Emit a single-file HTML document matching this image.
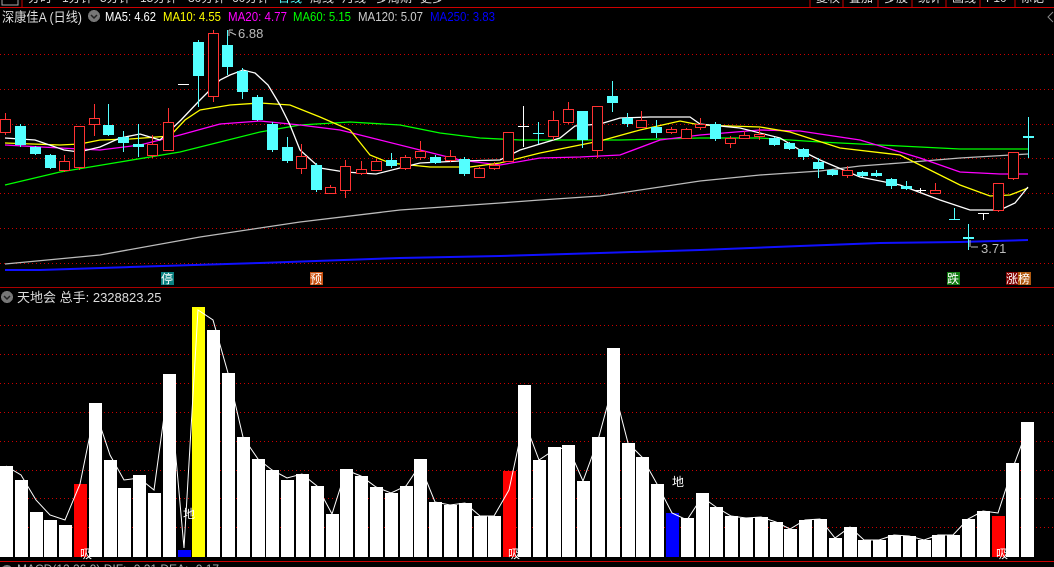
<!DOCTYPE html>
<html><head><meta charset="utf-8"><style>
html,body{margin:0;padding:0;background:#000;width:1054px;height:567px;overflow:hidden}
svg{position:absolute;left:0;top:0}
</style></head><body>
<svg width="1054" height="567" viewBox="0 0 1054 567" xmlns="http://www.w3.org/2000/svg" shape-rendering="crispEdges">
<g fill="#ddd" font-size="12" font-family="Liberation Sans, Noto Sans CJK SC, sans-serif">
<text x="28" y="2">分时</text><text x="62" y="2">1分钟</text><text x="100" y="2">5分钟</text><text x="140" y="2">15分钟</text><text x="188" y="2">30分钟</text><text x="232" y="2">60分钟</text>
<text x="278" y="2" fill="#5ff">日线</text><text x="310" y="2">周线</text><text x="342" y="2">月线</text><text x="376" y="2">多周期</text><text x="420" y="2">更多</text>
<text x="816" y="2">复权</text><text x="849" y="2">叠加</text><text x="884" y="2">多股</text><text x="918" y="2">统计</text><text x="952" y="2">画线</text><text x="986" y="2">F10</text><text x="1020" y="2">标记</text>
</g>
<rect x="2" y="-4" width="16" height="9" fill="none" stroke="#aaa"/>
<g stroke="#c00" stroke-width="1"><line x1="22" y1="0" x2="22" y2="7"/><line x1="810" y1="0" x2="810" y2="7"/><line x1="843" y1="0" x2="843" y2="7"/><line x1="878" y1="0" x2="878" y2="7"/><line x1="912" y1="0" x2="912" y2="7"/><line x1="946" y1="0" x2="946" y2="7"/><line x1="980" y1="0" x2="980" y2="7"/><line x1="1015" y1="0" x2="1015" y2="7"/></g>
<line x1="0" y1="7.5" x2="1054" y2="7.5" stroke="#c00"/>
<text x="2" y="22" fill="#ddd" font-size="13.5" font-family="Liberation Sans, Noto Sans CJK SC, sans-serif" textLength="80" lengthAdjust="spacingAndGlyphs">深康佳A (日线)</text>
<circle cx="94" cy="16" r="6" fill="#777"/><path d="M91 15 L94 18 L97 15" stroke="#222" fill="none" stroke-width="1.5" shape-rendering="auto"/>
<g font-size="13" font-family="Liberation Sans, sans-serif">
<text x="105" y="21" fill="#fff" textLength="51" lengthAdjust="spacingAndGlyphs">MA5: 4.62</text>
<text x="163" y="21" fill="#ff0" textLength="58" lengthAdjust="spacingAndGlyphs">MA10: 4.55</text>
<text x="228" y="21" fill="#f0f" textLength="59" lengthAdjust="spacingAndGlyphs">MA20: 4.77</text>
<text x="293" y="21" fill="#0f0" textLength="58" lengthAdjust="spacingAndGlyphs">MA60: 5.15</text>
<text x="358" y="21" fill="#ccc" textLength="65" lengthAdjust="spacingAndGlyphs">MA120: 5.07</text>
<text x="430" y="21" fill="#00f" textLength="65" lengthAdjust="spacingAndGlyphs">MA250: 3.83</text>
</g>
<path d="M1053 12 L1048 17 L1053 22" stroke="#888" fill="none" shape-rendering="auto"/>
<g stroke="#c00" stroke-dasharray="1 3">
<line x1="0" y1="54.5" x2="1054" y2="54.5"/><line x1="0" y1="89.5" x2="1054" y2="89.5"/><line x1="0" y1="124.5" x2="1054" y2="124.5"/><line x1="0" y1="158.5" x2="1054" y2="158.5"/><line x1="0" y1="193.5" x2="1054" y2="193.5"/><line x1="0" y1="228.5" x2="1054" y2="228.5"/><line x1="0" y1="263.5" x2="1054" y2="263.5"/>
<line x1="0" y1="325.5" x2="1054" y2="325.5"/><line x1="0" y1="354.5" x2="1054" y2="354.5"/><line x1="0" y1="383.5" x2="1054" y2="383.5"/><line x1="0" y1="412.5" x2="1054" y2="412.5"/><line x1="0" y1="441.5" x2="1054" y2="441.5"/><line x1="0" y1="470.5" x2="1054" y2="470.5"/><line x1="0" y1="498.5" x2="1054" y2="498.5"/><line x1="0" y1="527.5" x2="1054" y2="527.5"/>
</g>
<g fill="none" stroke-width="1.3" shape-rendering="auto">
<polyline stroke="#1010ff" stroke-width="2" points="5,270 40,270 130,267 260,263 400,258 500,256 600,253 700,250 800,246 880,243 960,242 1028,240"/>
<polyline stroke="#bbb" points="5,264 100,255 200,237 300,222 400,210 500,203 540,200 600,196 700,181 760,175 820,171 860,166 900,163 960,158 1028,154"/>
<polyline stroke="#0f0" points="5,185 60,172 120,162 180,152 220,142 260,132 300,125 350,122 400,125 440,133 480,138 520,140 560,140 620,140 700,138 760,138 820,142 900,146 960,149 1028,149"/>
<polyline stroke="#f0f" points="5,145 60,148 100,150 140,145 180,135 220,124 260,121 300,125 340,130 380,140 420,150 460,160 500,165 540,158 580,157 620,155 660,140 700,135 760,130 800,131 860,140 920,158 960,172 1000,174 1028,174"/>
<polyline stroke="#ff0" points="5,143 60,145 80,144 100,140 130,139 170,136 185,120 200,110 230,105 260,103 290,105 320,117 350,130 370,155 390,163 430,167 470,167 500,163 540,153 570,147 600,141 640,130 680,121 700,125 760,127 790,132 840,148 900,155 930,170 960,185 990,196 1010,195 1028,188"/>
<polyline stroke="#fff" points="5,138 35,140 64,150 79,152 100,147 120,138 140,134 160,140 181,120 200,100 220,80 230,75 243,70 255,73 268,85 280,105 290,125 300,150 320,168 345,172 376,174 400,168 420,163 460,161 500,160 520,150 560,138 575,126 600,124 620,118 650,117 690,117 700,124 740,128 780,138 800,150 820,160 860,177 900,185 940,200 970,210 1000,210 1015,203 1028,187"/>
</g>
<g stroke-width="1">
<g stroke="#ff3232" fill="#000">
<line x1="5.5" y1="113" x2="5.5" y2="135"/><rect x="0.5" y="119.5" width="10" height="13"/>
<line x1="64.5" y1="155" x2="64.5" y2="172"/><rect x="59.5" y="161.5" width="10" height="9"/>
<line x1="79.5" y1="126" x2="79.5" y2="170"/><rect x="74.5" y="126.5" width="10" height="41"/>
<line x1="94.5" y1="104" x2="94.5" y2="136"/><rect x="89.5" y="118.5" width="10" height="6"/>
<line x1="152.5" y1="135" x2="152.5" y2="158"/><rect x="147.5" y="144.5" width="10" height="11"/>
<line x1="168.5" y1="108" x2="168.5" y2="151"/><rect x="163.5" y="122.5" width="10" height="28"/>
<line x1="213.5" y1="30" x2="213.5" y2="102"/><rect x="208.5" y="33.5" width="10" height="63"/>
<line x1="301.5" y1="144" x2="301.5" y2="174"/><rect x="296.5" y="156.5" width="10" height="12"/>
<line x1="330.5" y1="185" x2="330.5" y2="194"/><rect x="325.5" y="187.5" width="10" height="6"/>
<line x1="345.5" y1="160" x2="345.5" y2="198"/><rect x="340.5" y="166.5" width="10" height="24"/>
<line x1="361.5" y1="161" x2="361.5" y2="175"/><rect x="356.5" y="169.5" width="10" height="4"/>
<line x1="376.5" y1="159" x2="376.5" y2="171"/><rect x="371.5" y="161.5" width="10" height="9"/>
<line x1="405.5" y1="155" x2="405.5" y2="170"/><rect x="400.5" y="157.5" width="10" height="11"/>
<line x1="420.5" y1="141" x2="420.5" y2="160"/><rect x="415.5" y="151.5" width="10" height="6"/>
<line x1="450.5" y1="150" x2="450.5" y2="162"/><rect x="445.5" y="156.5" width="10" height="4"/>
<line x1="479.5" y1="167" x2="479.5" y2="178"/><rect x="474.5" y="168.5" width="10" height="9"/>
<line x1="494.5" y1="162" x2="494.5" y2="170"/><rect x="489.5" y="165.5" width="10" height="3"/>
<line x1="508.5" y1="132" x2="508.5" y2="162"/><rect x="503.5" y="132.5" width="10" height="29"/>
<line x1="553.5" y1="111" x2="553.5" y2="140"/><rect x="548.5" y="120.5" width="10" height="16"/>
<line x1="568.5" y1="102" x2="568.5" y2="124"/><rect x="563.5" y="109.5" width="10" height="13"/>
<line x1="597.5" y1="106" x2="597.5" y2="158"/><rect x="592.5" y="106.5" width="10" height="44"/>
<line x1="641.5" y1="111" x2="641.5" y2="128"/><rect x="636.5" y="120.5" width="10" height="7"/>
<line x1="671.5" y1="127" x2="671.5" y2="134"/><rect x="666.5" y="129.5" width="10" height="3"/>
<line x1="686.5" y1="128" x2="686.5" y2="139"/><rect x="681.5" y="129.5" width="10" height="9"/>
<line x1="700.5" y1="118" x2="700.5" y2="130"/><rect x="695.5" y="124.5" width="10" height="3"/>
<line x1="730.5" y1="136" x2="730.5" y2="148"/><rect x="725.5" y="138.5" width="10" height="5"/>
<line x1="744.5" y1="131" x2="744.5" y2="139"/><rect x="739.5" y="135.5" width="10" height="3"/>
<line x1="759.5" y1="128" x2="759.5" y2="140"/><rect x="754.5" y="134.5" width="10" height="2"/>
<line x1="847.5" y1="166" x2="847.5" y2="178"/><rect x="842.5" y="170.5" width="10" height="5"/>
<line x1="935.5" y1="183" x2="935.5" y2="194"/><rect x="930.5" y="190.5" width="10" height="3"/>
<line x1="998.5" y1="183" x2="998.5" y2="212"/><rect x="993.5" y="183.5" width="10" height="27"/>
<line x1="1013.5" y1="152" x2="1013.5" y2="180"/><rect x="1008.5" y="152.5" width="10" height="26"/>
</g>
<g stroke="#54ffff" fill="#54ffff">
<line x1="20.5" y1="124" x2="20.5" y2="147"/><rect x="15" y="126" width="11" height="19" stroke="none"/>
<line x1="35.5" y1="146" x2="35.5" y2="155"/><rect x="30" y="147" width="11" height="7" stroke="none"/>
<line x1="50.5" y1="154" x2="50.5" y2="169"/><rect x="45" y="155" width="11" height="13" stroke="none"/>
<line x1="108.5" y1="104" x2="108.5" y2="136"/><rect x="103" y="125" width="11" height="10" stroke="none"/>
<line x1="123.5" y1="131" x2="123.5" y2="152"/><rect x="118" y="137" width="11" height="6" stroke="none"/>
<line x1="138.5" y1="124" x2="138.5" y2="157"/><rect x="133" y="144" width="11" height="3" stroke="none"/>
<line x1="198.5" y1="40" x2="198.5" y2="107"/><rect x="193" y="42" width="11" height="34" stroke="none"/>
<line x1="227.5" y1="30" x2="227.5" y2="75"/><rect x="222" y="45" width="11" height="22" stroke="none"/>
<line x1="242.5" y1="68" x2="242.5" y2="99"/><rect x="237" y="71" width="11" height="21" stroke="none"/>
<line x1="257.5" y1="95" x2="257.5" y2="121"/><rect x="252" y="97" width="11" height="23" stroke="none"/>
<line x1="272.5" y1="122" x2="272.5" y2="152"/><rect x="267" y="124" width="11" height="26" stroke="none"/>
<line x1="287.5" y1="137" x2="287.5" y2="163"/><rect x="282" y="147" width="11" height="14" stroke="none"/>
<line x1="316.5" y1="163" x2="316.5" y2="192"/><rect x="311" y="165" width="11" height="25" stroke="none"/>
<line x1="391.5" y1="153" x2="391.5" y2="168"/><rect x="386" y="160" width="11" height="6" stroke="none"/>
<line x1="435.5" y1="155" x2="435.5" y2="164"/><rect x="430" y="157" width="11" height="6" stroke="none"/>
<line x1="464.5" y1="157" x2="464.5" y2="176"/><rect x="459" y="159" width="11" height="15" stroke="none"/>
<line x1="538.5" y1="122" x2="538.5" y2="144"/><rect x="533" y="133" width="11" height="1" stroke="none"/>
<line x1="582.5" y1="111" x2="582.5" y2="148"/><rect x="577" y="111" width="11" height="29" stroke="none"/>
<line x1="612.5" y1="81" x2="612.5" y2="112"/><rect x="607" y="96" width="11" height="7" stroke="none"/>
<line x1="627.5" y1="113" x2="627.5" y2="127"/><rect x="622" y="118" width="11" height="6" stroke="none"/>
<line x1="656.5" y1="120" x2="656.5" y2="138"/><rect x="651" y="127" width="11" height="6" stroke="none"/>
<line x1="715.5" y1="122" x2="715.5" y2="141"/><rect x="710" y="124" width="11" height="15" stroke="none"/>
<line x1="774.5" y1="137" x2="774.5" y2="146"/><rect x="769" y="138" width="11" height="7" stroke="none"/>
<line x1="789.5" y1="142" x2="789.5" y2="150"/><rect x="784" y="143" width="11" height="6" stroke="none"/>
<line x1="803.5" y1="148" x2="803.5" y2="160"/><rect x="798" y="149" width="11" height="8" stroke="none"/>
<line x1="818.5" y1="158" x2="818.5" y2="178"/><rect x="813" y="162" width="11" height="7" stroke="none"/>
<line x1="832.5" y1="169" x2="832.5" y2="176"/><rect x="827" y="170" width="11" height="5" stroke="none"/>
<line x1="862.5" y1="171" x2="862.5" y2="177"/><rect x="857" y="172" width="11" height="4" stroke="none"/>
<line x1="876.5" y1="170" x2="876.5" y2="177"/><rect x="871" y="173" width="11" height="3" stroke="none"/>
<line x1="891.5" y1="178" x2="891.5" y2="189"/><rect x="886" y="179" width="11" height="7" stroke="none"/>
<line x1="906.5" y1="181" x2="906.5" y2="190"/><rect x="901" y="186" width="11" height="3" stroke="none"/>
<line x1="954.5" y1="208" x2="954.5" y2="220"/><rect x="949" y="219" width="11" height="1" stroke="none"/>
<line x1="968.5" y1="224" x2="968.5" y2="250"/><rect x="963" y="237" width="11" height="2" stroke="none"/>
<line x1="1028.5" y1="117" x2="1028.5" y2="158"/><rect x="1023" y="136" width="11" height="2" stroke="none"/>
</g>
<g stroke="#fff">
<line x1="178" y1="84.5" x2="189" y2="84.5"/>
<line x1="523.5" y1="106" x2="523.5" y2="147"/><line x1="518" y1="126.5" x2="529" y2="126.5"/>
<line x1="920.5" y1="188" x2="920.5" y2="192"/><line x1="915" y1="190.5" x2="926" y2="190.5"/>
<line x1="983.5" y1="213" x2="983.5" y2="220"/><line x1="978" y1="213.5" x2="989" y2="213.5"/>
</g>
</g>
<g stroke="#bbb" fill="none" shape-rendering="auto"><path d="M229 30 L229 36 M229 30 L233 30 M230 32 L236 35"/><path d="M970 240 L970 247 M971 247 L978 247"/></g>
<text x="238" y="38" fill="#bbb" font-size="13" font-family="Liberation Sans, sans-serif">6.88</text>
<text x="981" y="253" fill="#bbb" font-size="13" font-family="Liberation Sans, sans-serif">3.71</text>
<g font-size="12" font-family="Liberation Sans, Noto Sans CJK SC, sans-serif" fill="#fff">
<rect x="161" y="272" width="13" height="13" fill="#0a8080"/><text x="161" y="283">停</text>
<rect x="310" y="272" width="13" height="13" fill="#c85010"/><text x="310" y="283">预</text>
<rect x="947" y="272" width="13" height="13" fill="#107a10"/><text x="947" y="283">跌</text>
<rect x="1006" y="272" width="12" height="13" fill="#800000"/><rect x="1018" y="272" width="13" height="13" fill="#b05a10"/><text x="1006" y="283">涨榜</text>
</g>
<line x1="0" y1="287.5" x2="1054" y2="287.5" stroke="#a00"/>
<circle cx="7" cy="297" r="6" fill="#777"/><path d="M4 296 L7 299 L10 296" stroke="#222" fill="none" stroke-width="1.5" shape-rendering="auto"/>
<text x="17" y="302" fill="#ddd" font-size="13" font-family="Liberation Sans, Noto Sans CJK SC, sans-serif">天地会 总手: 2328823.25</text>
<g fill="#fff">
<rect x="0" y="466" width="13" height="91"/><rect x="15" y="480" width="13" height="77"/><rect x="30" y="512" width="13" height="45"/><rect x="44" y="520" width="13" height="37"/><rect x="59" y="525" width="13" height="32"/>
<rect x="74" y="484" width="13" height="73" fill="#f00"/><rect x="89" y="403" width="13" height="154"/><rect x="104" y="460" width="13" height="97"/><rect x="118" y="488" width="13" height="69"/><rect x="133" y="475" width="13" height="82"/>
<rect x="148" y="493" width="13" height="64"/><rect x="163" y="374" width="13" height="183"/><rect x="178" y="550" width="13" height="7" fill="#00f"/><rect x="192" y="307" width="13" height="250" fill="#ff0"/><rect x="207" y="330" width="13" height="227"/>
<rect x="222" y="373" width="13" height="184"/><rect x="237" y="437" width="13" height="120"/><rect x="252" y="459" width="13" height="98"/><rect x="266" y="470" width="13" height="87"/><rect x="281" y="480" width="13" height="77"/>
<rect x="296" y="474" width="13" height="83"/><rect x="311" y="486" width="13" height="71"/><rect x="326" y="514" width="13" height="43"/><rect x="340" y="469" width="13" height="88"/><rect x="355" y="476" width="13" height="81"/>
<rect x="370" y="487" width="13" height="70"/><rect x="385" y="493" width="13" height="64"/><rect x="400" y="486" width="13" height="71"/><rect x="414" y="459" width="13" height="98"/><rect x="429" y="502" width="13" height="55"/>
<rect x="444" y="505" width="13" height="52"/><rect x="459" y="503" width="13" height="54"/><rect x="474" y="516" width="13" height="41"/><rect x="488" y="516" width="13" height="41"/><rect x="503" y="471" width="13" height="86" fill="#f00"/>
<rect x="518" y="385" width="13" height="172"/><rect x="533" y="460" width="13" height="97"/><rect x="548" y="447" width="13" height="110"/><rect x="562" y="445" width="13" height="112"/><rect x="577" y="481" width="13" height="76"/>
<rect x="592" y="437" width="13" height="120"/><rect x="607" y="348" width="13" height="209"/><rect x="622" y="443" width="13" height="114"/><rect x="636" y="457" width="13" height="100"/><rect x="651" y="484" width="13" height="73"/>
<rect x="666" y="513" width="13" height="44" fill="#00f"/><rect x="681" y="518" width="13" height="39"/><rect x="696" y="493" width="13" height="64"/><rect x="710" y="507" width="13" height="50"/><rect x="725" y="516" width="13" height="41"/>
<rect x="740" y="518" width="13" height="39"/><rect x="755" y="517" width="13" height="40"/><rect x="770" y="522" width="13" height="35"/><rect x="784" y="529" width="13" height="28"/><rect x="799" y="520" width="13" height="37"/>
<rect x="814" y="519" width="13" height="38"/><rect x="829" y="538" width="13" height="19"/><rect x="844" y="527" width="13" height="30"/><rect x="858" y="540" width="13" height="17"/><rect x="873" y="540" width="13" height="17"/>
<rect x="888" y="535" width="13" height="22"/><rect x="903" y="536" width="13" height="21"/><rect x="918" y="540" width="13" height="17"/><rect x="932" y="535" width="13" height="22"/><rect x="947" y="535" width="13" height="22"/>
<rect x="962" y="519" width="13" height="38"/><rect x="977" y="511" width="13" height="46"/><rect x="992" y="516" width="13" height="41" fill="#f00"/><rect x="1006" y="463" width="13" height="94"/><rect x="1021" y="422" width="13" height="135"/>
</g>
<polyline fill="none" stroke="#fff" stroke-width="1" shape-rendering="auto" points="6,466 21,475 36,500 50,515 65,520 80,484 95,410 110,455 124,480 139,478 154,490 169,380 184,548 198,310 213,320 228,373 243,437 258,459 272,470 287,478 302,474 317,486 332,514 346,470 361,476 376,487 391,493 406,486 420,465 435,502 450,505 465,503 480,516 494,516 509,490 524,420 539,460 554,450 568,447 583,481 598,440 613,385 628,443 642,457 657,484 672,513 687,520 702,497 716,507 731,516 746,518 761,517 776,522 790,529 805,520 820,519 835,538 850,527 864,540 879,540 894,535 909,536 924,540 938,535 953,535 968,519 983,511 998,513 1012,470 1027,430"/>
<g fill="#fff" font-size="12" font-family="Liberation Sans, Noto Sans CJK SC, sans-serif">
<text x="80" y="558">吸</text><text x="508" y="558">吸</text><text x="996" y="558">吸</text>
<text x="183" y="518">地</text><text x="672" y="486">地</text>
</g>
<line x1="0" y1="561.5" x2="1054" y2="561.5" stroke="#c00"/>
<circle cx="7" cy="571" r="6" fill="#777"/>
<text x="17" y="573" fill="#aaa" font-size="12" font-family="Liberation Sans, sans-serif">MACD(12,26,9) DIF: -0.21 DEA: -0.17</text>
</svg>
</body></html>
